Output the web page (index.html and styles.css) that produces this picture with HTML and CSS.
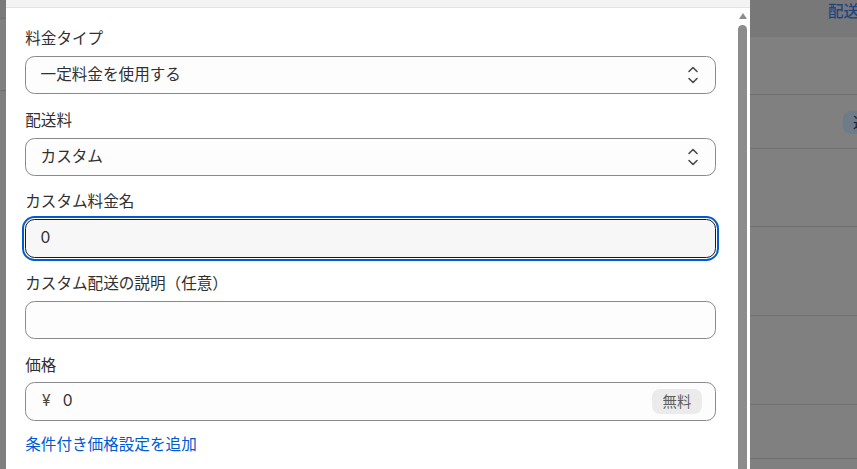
FILE: index.html
```html
<!DOCTYPE html>
<html lang="ja">
<head>
<meta charset="utf-8">
<link rel="stylesheet" href="styles.css">
</head>
<body>
<div class="left-strip">
  <div class="ls-top"></div>
  <div class="ls-mid"></div>
  <div class="ls-rest"></div>
</div>
<div class="modal">
  <div class="modal-head"></div>
  <div class="modal-body">
    <div class="content">
      <div class="field">
        <div class="label">料金タイプ</div>
        <div class="control select">
          <span class="value">一定料金を使用する</span>
          <svg class="chev" width="12" height="20" viewBox="0 0 12 20"><polyline points="2,6.5 6,2.5 10,6.5" fill="none" stroke="#4a4a4a" stroke-width="1.6" stroke-linecap="round" stroke-linejoin="round"/><polyline points="2,13.5 6,17.5 10,13.5" fill="none" stroke="#4a4a4a" stroke-width="1.6" stroke-linecap="round" stroke-linejoin="round"/></svg>
        </div>
      </div>
      <div class="field">
        <div class="label">配送料</div>
        <div class="control select">
          <span class="value">カスタム</span>
          <svg class="chev" width="12" height="20" viewBox="0 0 12 20"><polyline points="2,6.5 6,2.5 10,6.5" fill="none" stroke="#4a4a4a" stroke-width="1.6" stroke-linecap="round" stroke-linejoin="round"/><polyline points="2,13.5 6,17.5 10,13.5" fill="none" stroke="#4a4a4a" stroke-width="1.6" stroke-linecap="round" stroke-linejoin="round"/></svg>
        </div>
      </div>
      <div class="field">
        <div class="label">カスタム料金名</div>
        <div class="control focused"><span class="value">0</span></div>
      </div>
      <div class="field">
        <div class="label">カスタム配送の説明（任意）</div>
        <div class="control"></div>
      </div>
      <div class="field">
        <div class="label">価格</div>
        <div class="control price">
          <span class="prefix">¥</span>
          <span class="value">0</span>
          <span class="badge">無料</span>
        </div>
      </div>
      <a class="link">条件付き価格設定を追加</a>
    </div>
    <div class="scrollbar">
      <div class="sb-up"></div>
      <div class="sb-thumb"></div>
    </div>
  </div>
</div>
<div class="backdrop-right">
  <div class="br-head"><span class="br-title">配送</span></div>
  <div class="br-row r1"></div>
  <div class="br-row r2"><span class="br-badge">追</span></div>
  <div class="br-row r3"></div>
  <div class="br-row r4"></div>
  <div class="br-row r5"></div>
  <div class="br-row r6"></div>
  <div class="br-row r7"></div>
</div>
</body>
</html>
```
FILE: styles.css
```css
html, body {
  margin: 0;
  padding: 0;
}
body {
  width: 857px;
  height: 469px;
  overflow: hidden;
  display: flex;
  background: #7f7f7f;
  font-family: Inter, "Noto Sans CJK JP", sans-serif;
}
.left-strip {
  width: 6px;
  flex: none;
  display: flex;
  flex-direction: column;
}
.ls-top {
  height: 18px;
  background: #7a7a7a;
  border-bottom: 1px solid #6f6f6f;
}
.ls-mid {
  height: 71px;
  background: #808080;
  border-bottom: 1px solid #6f6f6f;
}
.ls-rest {
  flex: 1;
  background: #7f7f7f;
}
.modal {
  width: 744px;
  flex: none;
  background: #ffffff;
  display: flex;
  flex-direction: column;
}
.modal-head {
  height: 7px;
  flex: none;
  background: #f3f3f3;
  border-bottom: 1px solid #e3e3e3;
}
.modal-body {
  flex: 1;
  display: flex;
  min-height: 0;
}
.content {
  width: 729px;
  flex: none;
  box-sizing: border-box;
  padding: 19.2px 19.2px 0 19.2px;
  display: flex;
  flex-direction: column;
  gap: 14.4px;
}
.field {
  display: flex;
  flex-direction: column;
  gap: 4.8px;
}
.label {
  font-size: 15.6px;
  line-height: 24px;
  color: #303030;
}
.control {
  height: 38.4px;
  box-sizing: border-box;
  border: 1px solid #8a8a8a;
  border-radius: 9.6px;
  background: #fdfdfd;
  display: flex;
  align-items: center;
  padding: 0 14.4px;
  font-size: 15.6px;
  line-height: 24px;
  color: #303030;
}
.select {
  padding-right: 15.5px;
}
.value {
  flex: none;
}
.select .value {
  flex: 1;
}
.chev {
  flex: none;
  display: block;
}
.focused {
  background: #f7f7f7;
  border-color: #1a1a1a;
  outline: 2.4px solid #005bd3;
  outline-offset: 1px;
}
.price {
  padding-right: 13px;
}
.prefix {
  color: #4a4a4a;
  margin-right: 12px;
  margin-left: 1.5px;
}
.price .value {
  flex: 1;
}
.badge {
  flex: none;
  height: 25px;
  box-sizing: border-box;
  padding: 0 10.5px;
  border-radius: 8px;
  background: #ebebeb;
  color: #5e5e5e;
  font-size: 14.4px;
  line-height: 25px;
}
.link {
  margin-top: -2.4px;
  font-size: 15.6px;
  line-height: 24px;
  color: #005bd3;
  cursor: pointer;
}
.scrollbar {
  width: 15px;
  flex: none;
  display: flex;
  flex-direction: column;
  align-items: center;
}
.sb-up {
  margin-top: 4.7px;
  width: 0;
  height: 0;
  border-left: 4.5px solid transparent;
  border-right: 4.5px solid transparent;
  border-bottom: 6.6px solid #8c8c8c;
}
.sb-thumb {
  margin-top: 6.7px;
  width: 9px;
  flex: 1;
  background: #8c8c8c;
  border-radius: 4.5px 4.5px 0 0;
}
.backdrop-right {
  flex: 1;
  min-width: 0;
  display: flex;
  flex-direction: column;
  overflow: hidden;
}
.br-head {
  height: 37px;
  flex: none;
  background: #787878;
  padding-left: 78px;
  white-space: nowrap;
}
.br-title {
  display: block;
  font-size: 15.6px;
  line-height: 24px;
  color: #1e4682;
  font-weight: 500;
}
.br-row {
  flex: none;
  background: #808080;
  border-top: 1px solid #6f6f6f;
}
.r1 { height: 57px; border-top: none; }
.r2 { height: 53px; padding-left: 93px; white-space: nowrap; }
.r3 { height: 77px; }
.r4 { height: 88px; }
.r5 { height: 88px; }
.r6 { height: 53px; }
.r7 { flex: 1; }
.br-badge {
  display: inline-block;
  margin-top: 16px;
  height: 23px;
  padding: 0 10px;
  border-radius: 8px;
  background: #6e7b88;
  color: #1a1a1a;
  font-size: 14.4px;
  line-height: 23px;
}
```
